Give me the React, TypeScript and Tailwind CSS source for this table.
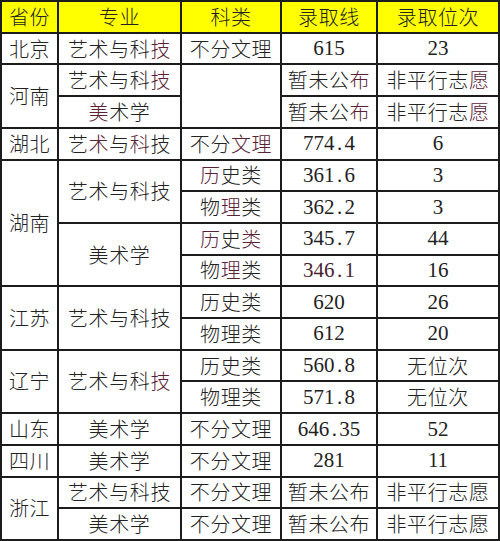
import React from "react";

const CN = "font-['Noto_Sans_CJK_SC',sans-serif]";

function Num({ v, red }: { v: string; red?: boolean }) {
  const parts = v.split(".");
  return (
    <span
      className={`font-['Liberation_Serif','Noto_Sans_CJK_SC',serif] text-[21px] leading-none ${
        red ? "text-[#4a1f30]" : "text-[#222222]"
      }`}
    >
      {parts[0]}
      {parts.length > 1 && (
        <>
          <span className="inline-block w-[10px] text-center">.</span>
          {parts[1]}
        </>
      )}
    </span>
  );
}

function Cell({
  children,
  span,
  header,
}: {
  children?: React.ReactNode;
  span?: 2 | 4;
  header?: boolean;
}) {
  const spanCls = span === 4 ? "row-span-4" : span === 2 ? "row-span-2" : "";
  return (
    <div
      className={`${spanCls} ${
        header ? "bg-[#ffff00]" : "bg-white"
      } flex items-center justify-center min-h-0 overflow-hidden`}
    >
      {children}
    </div>
  );
}

function T({ children }: { children: React.ReactNode }) {
  return (
    <span
      className={`${CN} text-[20px] font-light leading-none tracking-[0.6px] text-[#222222] whitespace-nowrap`}
    >
      {children}
    </span>
  );
}

const R = ({ children }: { children: React.ReactNode }) => (
  <span className="text-[#5a2236]">{children}</span>
);

export default function App() {
  return (
    <div className="w-[500px] h-[541px] bg-white">
      <div className="grid h-[541px] w-[500px] grid-cols-[55px_121px_98px_94px_120px] grid-rows-[repeat(17,minmax(0,1fr))] gap-[2px] bg-[#1c1c1c] p-[2px]">
        {/* header */}
        <Cell header>
          <T>省份</T>
        </Cell>
        <Cell header>
          <T>专业</T>
        </Cell>
        <Cell header>
          <T>科类</T>
        </Cell>
        <Cell header>
          <T>录取线</T>
        </Cell>
        <Cell header>
          <T>录取位次</T>
        </Cell>

        {/* 北京 */}
        <Cell>
          <T>北京</T>
        </Cell>
        <Cell>
          <T>
            艺术与科<R>技</R>
          </T>
        </Cell>
        <Cell>
          <T>不分文理</T>
        </Cell>
        <Cell>
          <Num v="615" />
        </Cell>
        <Cell>
          <Num v="23" />
        </Cell>

        {/* 河南 */}
        <Cell span={2}>
          <T>河南</T>
        </Cell>
        <Cell>
          <T>
            艺术与科<R>技</R>
          </T>
        </Cell>
        <Cell span={2} />
        <Cell>
          <T>
            暂未公<R>布</R>
          </T>
        </Cell>
        <Cell>
          <T>
            非平行志<R>愿</R>
          </T>
        </Cell>
        <Cell>
          <T>
            <R>美</R>术学
          </T>
        </Cell>
        <Cell>
          <T>
            暂未公<R>布</R>
          </T>
        </Cell>
        <Cell>
          <T>
            非平行志<R>愿</R>
          </T>
        </Cell>

        {/* 湖北 */}
        <Cell>
          <T>湖北</T>
        </Cell>
        <Cell>
          <T>
            艺<R>术</R>与<R>科</R>技
          </T>
        </Cell>
        <Cell>
          <T>
            不分<R>文理</R>
          </T>
        </Cell>
        <Cell>
          <Num v="774.4" />
        </Cell>
        <Cell>
          <Num v="6" />
        </Cell>

        {/* 湖南 */}
        <Cell span={4}>
          <T>湖南</T>
        </Cell>
        <Cell span={2}>
          <T>艺术与科技</T>
        </Cell>
        <Cell>
          <T>
            <R>历</R>史类
          </T>
        </Cell>
        <Cell>
          <Num v="361.6" />
        </Cell>
        <Cell>
          <Num v="3" />
        </Cell>
        <Cell>
          <T>
            物<R>理</R>类
          </T>
        </Cell>
        <Cell>
          <Num v="362.2" />
        </Cell>
        <Cell>
          <Num v="3" />
        </Cell>
        <Cell span={2}>
          <T>美术学</T>
        </Cell>
        <Cell>
          <T>
            <R>历</R>史<R>类</R>
          </T>
        </Cell>
        <Cell>
          <Num v="345.7" />
        </Cell>
        <Cell>
          <Num v="44" />
        </Cell>
        <Cell>
          <T>
            物<R>理</R>类
          </T>
        </Cell>
        <Cell>
          <Num v="346.1" red />
        </Cell>
        <Cell>
          <Num v="16" />
        </Cell>

        {/* 江苏 */}
        <Cell span={2}>
          <T>江苏</T>
        </Cell>
        <Cell span={2}>
          <T>艺术与科技</T>
        </Cell>
        <Cell>
          <T>历史类</T>
        </Cell>
        <Cell>
          <Num v="620" />
        </Cell>
        <Cell>
          <Num v="26" />
        </Cell>
        <Cell>
          <T>物理类</T>
        </Cell>
        <Cell>
          <Num v="612" />
        </Cell>
        <Cell>
          <Num v="20" />
        </Cell>

        {/* 辽宁 */}
        <Cell span={2}>
          <T>辽宁</T>
        </Cell>
        <Cell span={2}>
          <T>
            艺术与科<R>技</R>
          </T>
        </Cell>
        <Cell>
          <T>历史类</T>
        </Cell>
        <Cell>
          <Num v="560.8" />
        </Cell>
        <Cell>
          <T>无位次</T>
        </Cell>
        <Cell>
          <T>物理类</T>
        </Cell>
        <Cell>
          <Num v="571.8" />
        </Cell>
        <Cell>
          <T>无位次</T>
        </Cell>

        {/* 山东 */}
        <Cell>
          <T>山东</T>
        </Cell>
        <Cell>
          <T>美术学</T>
        </Cell>
        <Cell>
          <T>不分文理</T>
        </Cell>
        <Cell>
          <Num v="646.35" />
        </Cell>
        <Cell>
          <Num v="52" />
        </Cell>

        {/* 四川 */}
        <Cell>
          <T>四川</T>
        </Cell>
        <Cell>
          <T>美术学</T>
        </Cell>
        <Cell>
          <T>不分文理</T>
        </Cell>
        <Cell>
          <Num v="281" />
        </Cell>
        <Cell>
          <Num v="11" />
        </Cell>

        {/* 浙江 */}
        <Cell span={2}>
          <T>浙江</T>
        </Cell>
        <Cell>
          <T>艺术与科技</T>
        </Cell>
        <Cell>
          <T>不分文理</T>
        </Cell>
        <Cell>
          <T>暂未公布</T>
        </Cell>
        <Cell>
          <T>非平行志愿</T>
        </Cell>
        <Cell>
          <T>美术学</T>
        </Cell>
        <Cell>
          <T>不分文理</T>
        </Cell>
        <Cell>
          <T>暂未公布</T>
        </Cell>
        <Cell>
          <T>非平行志愿</T>
        </Cell>
      </div>
    </div>
  );
}
